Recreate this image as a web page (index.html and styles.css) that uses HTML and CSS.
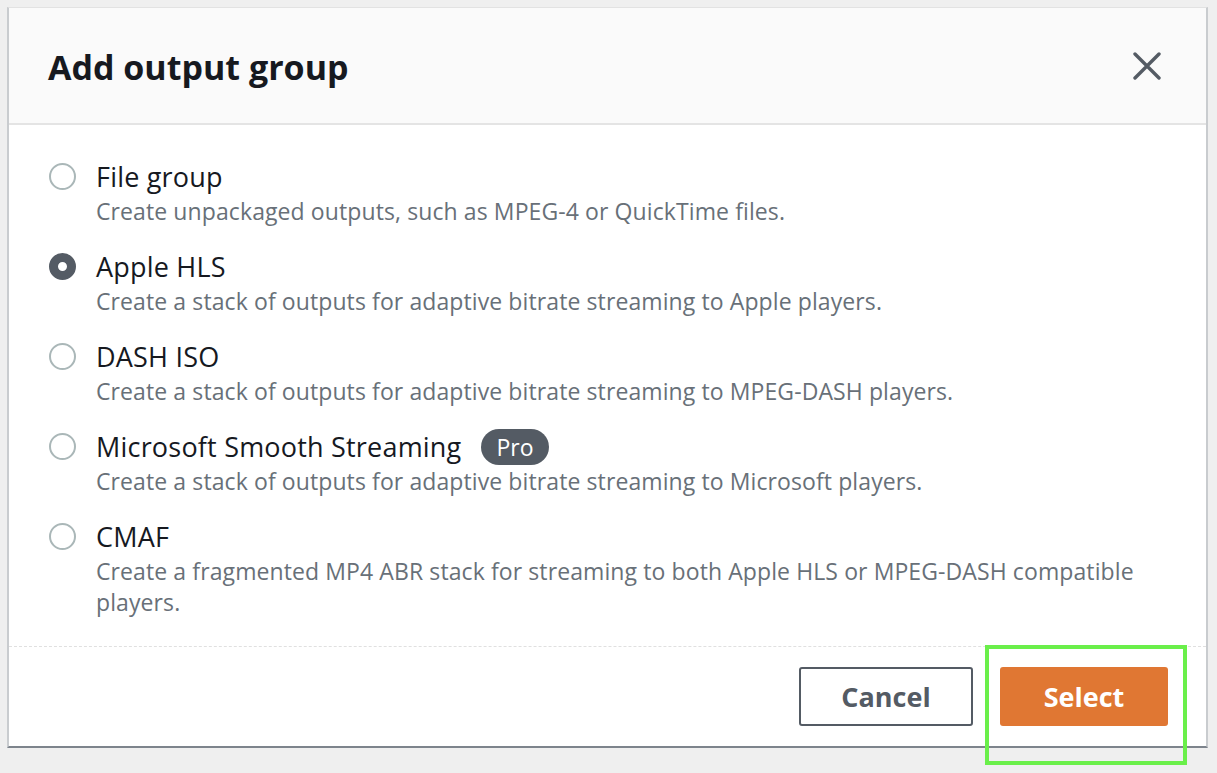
FILE: index.html
```html
<!DOCTYPE html>
<html lang="en">
<head>
<meta charset="utf-8">
<title>Add output group</title>
<link rel="stylesheet" href="styles.css">
</head>
<body>
<div class="modal">
  <div class="modal-header">
    <h2 class="modal-title">Add output group</h2>
    <button class="close-btn" aria-label="Close">
      <svg width="28" height="28" viewBox="0 0 28 28"><path d="M2 2 L26 26 M26 2 L2 26" stroke="#545b64" stroke-width="3.4" stroke-linecap="round" fill="none"/></svg>
    </button>
  </div>
  <div class="modal-body">
    <label class="option">
      <span class="radio"></span>
      <span class="option-text">
        <span class="option-label">File group</span>
        <span class="option-desc">Create unpackaged outputs, such as MPEG-4 or QuickTime files.</span>
      </span>
    </label>
    <label class="option">
      <span class="radio checked"></span>
      <span class="option-text">
        <span class="option-label">Apple HLS</span>
        <span class="option-desc">Create a stack of outputs for adaptive bitrate streaming to Apple players.</span>
      </span>
    </label>
    <label class="option">
      <span class="radio"></span>
      <span class="option-text">
        <span class="option-label">DASH ISO</span>
        <span class="option-desc">Create a stack of outputs for adaptive bitrate streaming to MPEG-DASH players.</span>
      </span>
    </label>
    <label class="option">
      <span class="radio"></span>
      <span class="option-text">
        <span class="option-label">Microsoft Smooth Streaming <span class="badge">Pro</span></span>
        <span class="option-desc">Create a stack of outputs for adaptive bitrate streaming to Microsoft players.</span>
      </span>
    </label>
    <label class="option">
      <span class="radio"></span>
      <span class="option-text">
        <span class="option-label">CMAF</span>
        <span class="option-desc">Create a fragmented MP4 ABR stack for streaming to both Apple HLS or MPEG-DASH compatible players.</span>
      </span>
    </label>
  </div>
  <div class="modal-footer">
    <button class="btn btn-secondary">Cancel</button>
    <span class="highlight">
      <button class="btn btn-primary">Select</button>
    </span>
  </div>
</div>
</body>
</html>
```
FILE: styles.css
```css
* { box-sizing: border-box; }
html, body { margin: 0; padding: 0; }
body {
  background: #efefef;
  font-family: "Open Sans", "Noto Sans", Arial, sans-serif;
  width: 1217px;
  height: 773px;
  padding: 7px 0 0 7px;
}
.modal {
  width: 1201px;
  height: 741px;
  background: #fff;
  border-left: 2px solid #c9cccf;
  border-top: 1px solid #e2e2e2;
  border-right: 2px solid #c9cccf;
  border-bottom: 2px solid #7d848c;
  display: flex;
  flex-direction: column;
}
.modal-header {
  height: 117px;
  background: #fafafa;
  border-bottom: 2px solid #e4e4e4;
  display: flex;
  align-items: center;
  justify-content: space-between;
  padding: 0 45px 0 39px;
}
.modal-title {
  margin: 0;
  font-size: 34px;
  font-weight: 700;
  color: #16191f;
  padding-top: 2px;
}
.close-btn {
  background: none;
  border: 0;
  padding: 0;
  width: 28px;
  height: 28px;
  cursor: pointer;
  display: flex;
}
.modal-body {
  flex: 1;
  padding: 36px 40px 0 39px;
  display: flex;
  flex-direction: column;
  gap: 24px;
}
.option {
  display: flex;
  align-items: flex-start;
  gap: 20px;
}
.radio {
  flex: none;
  width: 27px;
  height: 27px;
  border-radius: 50%;
  border: 2px solid #aab7b8;
  margin-top: 2px;
  margin-left: 1px;
}
.radio.checked {
  border: 9px solid #545b64;
  background: #fff;
}
.option-text {
  display: flex;
  flex-direction: column;
}
.option-label {
  font-size: 27px;
  letter-spacing: 0.2px;
  line-height: 32px;
  height: 32px;
  color: #16191f;
  display: flex;
  align-items: center;
}
.option-desc {
  font-size: 23px;
  line-height: 31px;
  color: #687078;
  margin-top: 3px;
  letter-spacing: 0.1px;
}
.badge {
  display: inline-block;
  margin-left: 20px;
  background: #545b64;
  color: #fff;
  font-size: 23px;
  letter-spacing: 0;
  line-height: 36px;
  height: 36px;
  padding: 0 15px;
  border-radius: 18px;
}
.modal-footer {
  height: 100px;
  border-top: 1px dashed #e0e0e0;
  display: flex;
  justify-content: flex-end;
  align-items: center;
  padding: 0 38px 0 0;
  gap: 27px;
}
.btn {
  font-family: inherit;
  font-size: 27px;
  font-weight: 700;
  height: 59px;
  border-radius: 3px;
  cursor: pointer;
}
.btn-secondary {
  width: 174px;
  background: #fff;
  color: #545b64;
  border: 2px solid #545b64;
}
.highlight {
  position: relative;
  display: flex;
}
.highlight::after {
  content: "";
  position: absolute;
  left: -15px;
  top: -22px;
  right: -19px;
  bottom: -39px;
  border: 4px solid #6aef4a;
  pointer-events: none;
}
.btn-primary {
  width: 168px;
  background: #e07733;
  color: #fff;
  border: 0;
}
```
